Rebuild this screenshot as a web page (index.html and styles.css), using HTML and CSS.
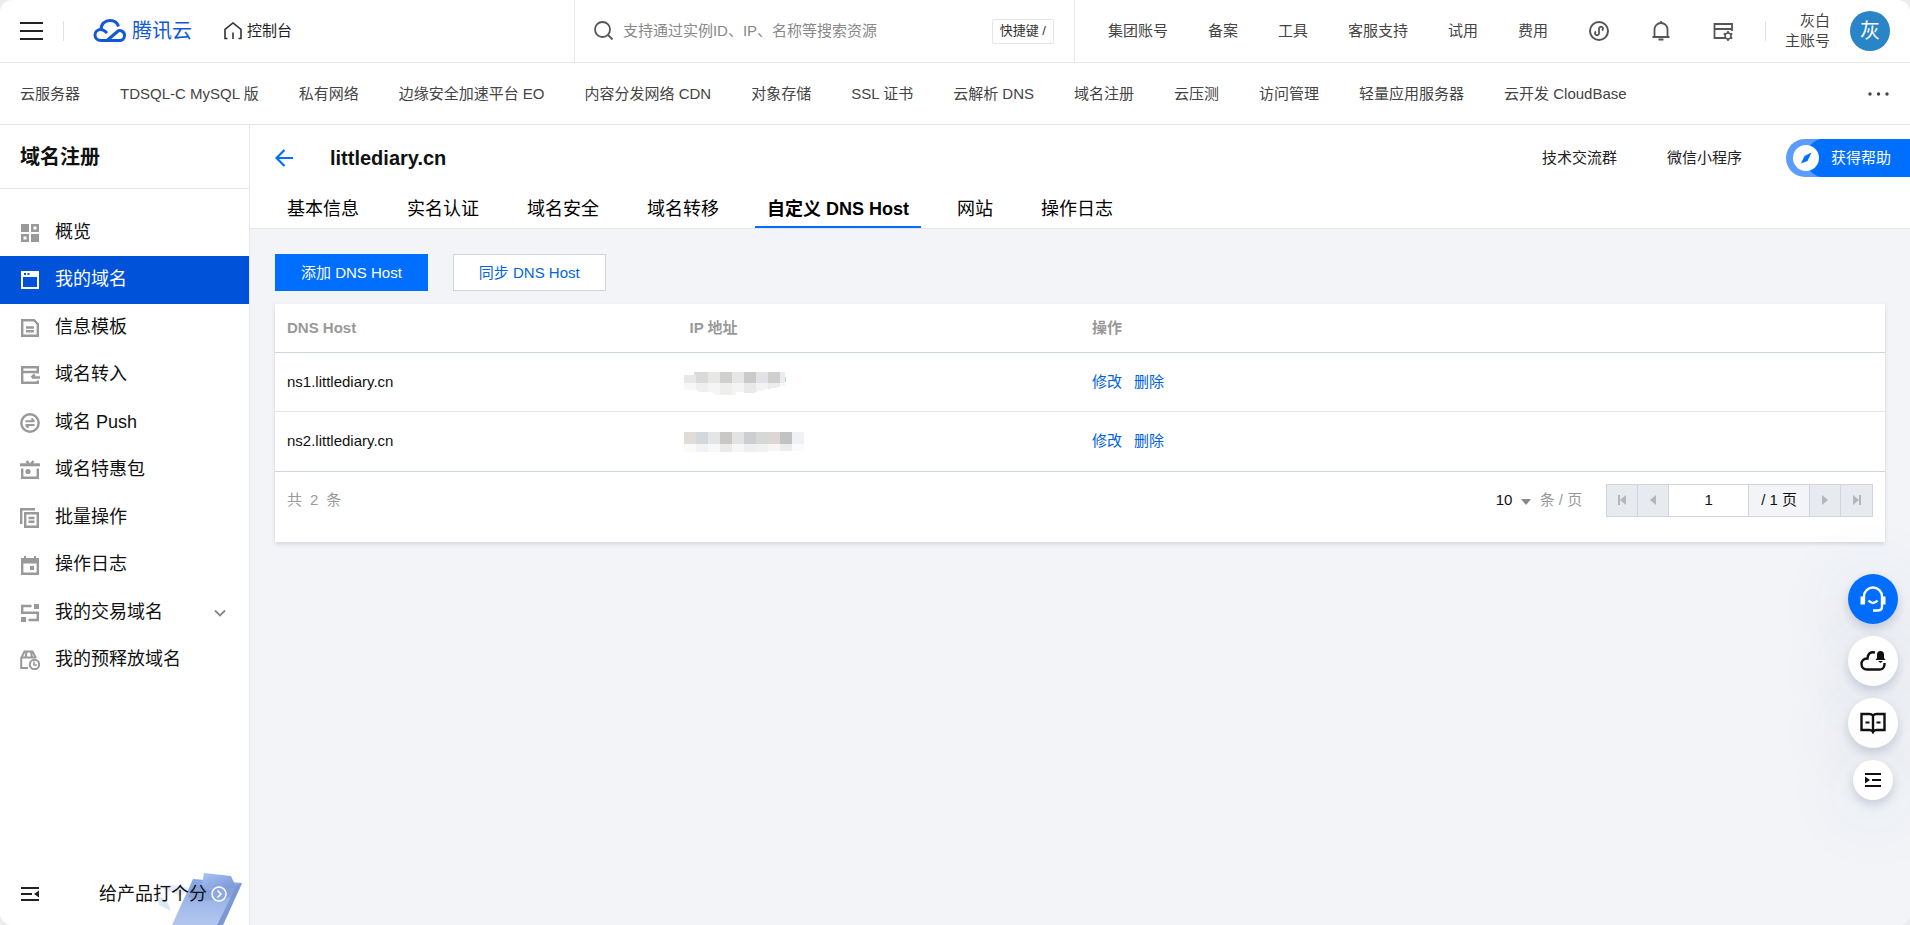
FILE: index.html
```html
<!DOCTYPE html>
<html lang="zh-CN">
<head>
<meta charset="utf-8">
<title>域名注册 - 控制台</title>
<link rel="stylesheet" href="styles.css">
</head>
<body>
<div class="app">
  <header class="topbar">
    <div class="topbar-left">
      <button class="icon-btn" aria-label="菜单">
        <svg width="23" height="18" viewBox="0 0 23 18"><path d="M0 1h23M0 9h23M0 17h23" stroke="#222" stroke-width="2"/></svg>
      </button>
      <span class="divider"></span>
      <a class="logo" href="#">
        <svg width="34" height="26" viewBox="0 0 34 26" fill="none" stroke="#1258d6" stroke-width="3">
          <path d="M14 22.500L24.500 13.500C27 11.500 31.500 13 31.500 17.500C31.500 21 29 22.500 26.500 22.500H8C4.500 22.500 2 20 2 17C2 14 4.500 11.500 8 11.500C10 11.500 11.500 12.500 14 15"/>
          <path d="M8 11.500C8 6 12 2.500 17 2.500C21.500 2.500 24.500 5 25.500 8.500"/>
        </svg>
        <span>腾讯云</span>
      </a>
      <a class="home" href="#">
        <svg width="18" height="18" viewBox="0 0 18 18" fill="none" stroke="#333" stroke-width="1.600"><path d="M3.500 16.500H1V7.500L9 1l8 6.500v9h-2.500M9 10.500V17"/></svg>
        <span>控制台</span>
      </a>
    </div>
    <form class="search">
      <svg width="20" height="20" viewBox="0 0 20 20" fill="none" stroke="#555" stroke-width="1.800"><circle cx="8.500" cy="8.500" r="7.500"/><path d="M14 14l4.500 4.500"/></svg>
      <input class="search-input" type="text" aria-label="搜索" placeholder="支持通过实例ID、IP、名称等搜索资源">
      <kbd class="shortcut">快捷键 /</kbd>
    </form>
    <nav class="topbar-right">
      <a href="#">集团账号</a>
      <a href="#">备案</a>
      <a href="#">工具</a>
      <a href="#">客服支持</a>
      <a href="#">试用</a>
      <a href="#">费用</a>
      <button class="icon-btn" aria-label="小程序">
        <svg width="22" height="22" viewBox="0 0 22 22" fill="none" stroke="#555" stroke-width="2"><circle cx="11" cy="11" r="9"/><path d="M8 11.500a2 2 0 1 0 3 1.800V8.700A2 2 0 1 1 14 10.500" stroke-width="1.800"/></svg>
      </button>
      <button class="icon-btn" aria-label="消息">
        <svg width="22" height="22" viewBox="0 0 22 22" fill="none" stroke="#555" stroke-width="1.800"><path d="M2.500 17h17M4.500 17V9.500a6.500 6.500 0 0 1 13 0V17M11 3V1M8.500 19.500h5"/></svg>
      </button>
      <button class="icon-btn" aria-label="设置">
        <svg width="22" height="22" viewBox="0 0 22 22" fill="none" stroke="#555" stroke-width="1.800"><path d="M20 11V4H2.500v14H12M2.500 9H20"/><circle cx="16" cy="16" r="3" stroke-width="1.600"/><path d="M16 11v2M16 19v2M11.700 13.500l1.700 1M18.600 17.500l1.700 1M20.300 13.500l-1.700 1M13.400 17.500l-1.700 1" stroke-width="1.700"/></svg>
      </button>
    </nav>
    <div class="account">
      <div class="account-name">灰白<br>主账号</div>
      <button class="avatar">灰</button>
    </div>
  </header>

  <nav class="products">
    <a href="#">云服务器</a>
    <a href="#">TDSQL-C MySQL 版</a>
    <a href="#">私有网络</a>
    <a href="#">边缘安全加速平台 EO</a>
    <a href="#">内容分发网络 CDN</a>
    <a href="#">对象存储</a>
    <a href="#">SSL 证书</a>
    <a href="#">云解析 DNS</a>
    <a href="#">域名注册</a>
    <a href="#">云压测</a>
    <a href="#">访问管理</a>
    <a href="#">轻量应用服务器</a>
    <a href="#">云开发 CloudBase</a>
    <button class="icon-btn more" aria-label="更多">
      <svg width="22" height="4" viewBox="0 0 22 4" fill="#444"><circle cx="2" cy="2" r="1.700"/><circle cx="10.500" cy="2" r="1.700"/><circle cx="19" cy="2" r="1.700"/></svg>
    </button>
  </nav>

  <div class="body">
    <aside class="sidebar">
      <h2 class="sidebar-title">域名注册</h2>
      <nav class="menu">
        <a class="menu-item" href="#">
          <svg class="menu-icon" viewBox="0 0 20 20"><path fill-rule="evenodd" d="M1 1h8v8H1zM11 1h8v8h-8zM13.500 3.500v3h3v-3zM1 11h8v8H1zM3.500 13.500v3h3v-3zM11 11h8v8h-8z"/></svg>
          <span>概览</span>
        </a>
        <a class="menu-item active" href="#" aria-current="page">
          <svg class="menu-icon" viewBox="0 0 20 20"><path fill-rule="evenodd" d="M1 1h18v18H1zM3 7v10h14V7zM4 3v2h2V3zM7.500 3v2h2V3z"/></svg>
          <span>我的域名</span>
        </a>
        <a class="menu-item" href="#">
          <svg class="menu-icon line" viewBox="0 0 20 20"><path d="M2.200 2.200H14L17.800 6v11.800H2.200zM6 9.500h8M6 13.200h8"/></svg>
          <span>信息模板</span>
        </a>
        <a class="menu-item" href="#">
          <svg class="menu-icon line" viewBox="0 0 20 20"><path d="M17.800 8.500V2.200H2.200v15.600h15.600V15.500M2 7h16M20 12.500h-8M14.800 9.500l-3.300 3"/></svg>
          <span>域名转入</span>
        </a>
        <a class="menu-item" href="#">
          <svg class="menu-icon line" viewBox="0 0 20 20"><circle cx="10" cy="10" r="8.700"/><path d="M5.500 8.300h9M11.500 5.500l2.500 2.500M14.500 12h-9M8.500 14.800L6 12.300" stroke-width="2"/></svg>
          <span>域名 Push</span>
        </a>
        <a class="menu-item" href="#">
          <svg class="menu-icon line" viewBox="0 0 20 20"><path d="M0 4.800h20" stroke-width="3"/><path d="M2.200 8.500v9.300h15.600V8.500M6.500 1l2.500 3M13.500 1L11 4"/><circle cx="8" cy="11.500" r="2.600" fill="#999" stroke="none"/></svg>
          <span>域名特惠包</span>
        </a>
        <a class="menu-item" href="#">
          <svg class="menu-icon line" viewBox="0 0 20 20"><path d="M1.200 16V1.200H15M5.200 5.200h12.600v13.600H5.200zM8.500 10h6M8.500 13.800h6"/></svg>
          <span>批量操作</span>
        </a>
        <a class="menu-item" href="#">
          <svg class="menu-icon" viewBox="0 0 20 20"><path fill-rule="evenodd" d="M4 1h2v2h8V1h2v2h3v17H1V3h3zM3.400 8.500v9.100h13.200V8.500zM10 11h4v4h-4z"/></svg>
          <span>操作日志</span>
        </a>
        <a class="menu-item" href="#">
          <svg class="menu-icon line" viewBox="0 0 20 20"><path d="M11.500 3H2.200v6.800h15.600V17H8.500"/><path d="M14 1h5v5h-5zM1 14h5v5H1z" fill="#999" stroke="none"/></svg>
          <span>我的交易域名</span>
          <svg class="chevron" width="12" height="8" viewBox="0 0 12 8" fill="none" stroke="#888" stroke-width="1.800"><path d="M1 1.500l5 5 5-5"/></svg>
        </a>
        <a class="menu-item" href="#">
          <svg class="menu-icon line" viewBox="0 0 20 20"><path d="M8 18H1.200V8L4.500 1.500h8L16 8M1 7.500h15M6.500 2L5.500 7.500M11 2l1 5.500" stroke-width="2"/><circle cx="14.500" cy="14.500" r="4.700" stroke-width="2"/><path d="M14 11.500v3.500h3" stroke-width="1.500"/></svg>
          <span>我的预释放域名</span>
        </a>
      </nav>
      <div class="sidebar-footer">
        <svg class="clipboard" width="90" height="52" viewBox="0 0 90 52">
          <defs>
            <linearGradient id="board" x1="0" y1="0" x2="0" y2="1"><stop offset="0" stop-color="#86a6e0"/><stop offset="1" stop-color="#b4c8f0"/></linearGradient>
            <linearGradient id="clip" x1="0" y1="0" x2="1" y2="1"><stop offset="0" stop-color="#a9c3f4"/><stop offset="1" stop-color="#7896d6"/></linearGradient>
          </defs>
          <path d="M40 6l49 4-19 42H19z" fill="url(#board)"/>
          <path d="M84 12l5-2-19 42h-6z" fill="#7c98d2"/>
          <path d="M38 14c8-5 14 4 24 3s14-5 22-4l-4 10c-9 5-34 6-45 1z" fill="#7893d0" opacity="0.500"/>
          <path d="M51 0l27 3 5 11c-8 2-24 2-34-2z" fill="url(#clip)"/>
          <path d="M4 22l10 6 4 10-12-6z" fill="#dfe6f4"/>
          <path d="M4 13q16-3 32 2l-8 8z" fill="#e4eaf7"/>
        </svg>
        <button class="icon-btn" aria-label="收起">
          <svg width="18" height="16" viewBox="0 0 18 16"><path d="M0 2h18M0 8h11M0 14h18" stroke="#222" stroke-width="2"/><path d="M18 4.500v7L13 8z" fill="#222"/></svg>
        </button>
        <a class="rate" href="#">
          <span>给产品打个分</span>
          <svg width="16" height="16" viewBox="0 0 16 16" fill="none" stroke="#fff" stroke-width="1.500"><circle cx="8" cy="8" r="7" fill="#8ea8e0"/><path d="M6.500 4.500L10 8l-3.500 3.500"/></svg>
        </a>
      </div>
    </aside>

    <main class="main">
      <div class="page-head">
        <div class="title-row">
          <a class="back" href="#" aria-label="返回">
            <svg width="18" height="18" viewBox="0 0 18 18" fill="none" stroke="#006eff" stroke-width="2.200"><path d="M18 9H2M9.500 1L1.500 9l8 8"/></svg>
          </a>
          <h1 class="page-title">littlediary.cn</h1>
          <div class="head-links">
            <a href="#">技术交流群</a>
            <a href="#">微信小程序</a>
            <button class="help">
              <svg width="38" height="38" viewBox="0 0 38 38"><circle cx="20" cy="19" r="13" fill="#fff"/><path d="M25.500 13.500l-4 8.500-6.500 2.500 3.500-7.500z" fill="#006eff"/></svg>
              <span>获得帮助</span>
            </button>
          </div>
        </div>
        <nav class="tabs">
          <a class="tab" href="#">基本信息</a>
          <a class="tab" href="#">实名认证</a>
          <a class="tab" href="#">域名安全</a>
          <a class="tab" href="#">域名转移</a>
          <a class="tab current" href="#" aria-current="page">自定义 DNS Host</a>
          <a class="tab" href="#">网站</a>
          <a class="tab" href="#">操作日志</a>
        </nav>
      </div>

      <div class="content">
        <div class="actions">
          <button class="btn primary">添加 DNS Host</button>
          <button class="btn">同步 DNS Host</button>
        </div>
        <section class="card">
          <table class="hosts">
            <thead>
              <tr><th>DNS Host</th><th>IP 地址</th><th class="ops">操作</th></tr>
            </thead>
            <tbody>
              <tr>
                <td>ns1.littlediary.cn</td>
                <td class="masked">
                  <svg width="102" height="23" viewBox="0 0 102 23" shape-rendering="crispEdges">
                    <path d="M0 3h12v8H0z" fill="#e8e8e8"/><path d="M10 0h14v11H12V3h-2z" fill="#dadada"/><path d="M24 0h12v11H24z" fill="#e7e7e5"/><path d="M36 0h12v11H36z" fill="#d0d0ce"/><path d="M48 0h12v11H48z" fill="#e6e6e7"/><path d="M60 0h12v11H60z" fill="#cacaca"/><path d="M72 0h12v11H72z" fill="#e1e2e5"/><path d="M84 0h12v11H84z" fill="#d1cfce"/><path d="M96 0h5v11h-5z" fill="#e8eced"/><path d="M101 5h1v5h-1z" fill="#a8dff0"/>
                    <path d="M0 11h12v7H0z" fill="#f7f7f7"/><path d="M12 11h12v9h-9l-3-2z" fill="#efefef"/><path d="M24 11h12v12h-4l-4-3h-4z" fill="#f5f5f5"/><path d="M36 11h12v12H36z" fill="#eeeeec"/><path d="M48 11h12v9h-8v3h-4z" fill="#f4f4f4"/><path d="M60 11h12v9l-2 1H60z" fill="#e9e9e9"/><path d="M72 11h12v6l-12 3z" fill="#f3f3f4"/><path d="M84 11h12v4l-12 2z" fill="#ececec"/><path d="M96 11h5v3h-5z" fill="#f7f7f7"/>
                  </svg>
                </td>
                <td class="ops"><a href="#">修改</a><a href="#">删除</a></td>
              </tr>
              <tr>
                <td>ns2.littlediary.cn</td>
                <td class="masked">
                  <svg width="120" height="23" viewBox="0 0 120 23" shape-rendering="crispEdges">
                    <path d="M0 0h12v12H0z" fill="#e2dcd8"/><path d="M12 0h12v12H12z" fill="#d3d8dd"/><path d="M24 0h12v12H24z" fill="#e5e5e5"/><path d="M36 0h12v12H36z" fill="#c9c8c7"/><path d="M48 0h12v12H48z" fill="#e3e3e4"/><path d="M60 0h12v12H60z" fill="#cdced1"/><path d="M72 0h12v12H72z" fill="#d6d8d7"/><path d="M84 0h12v12H84z" fill="#dcd7d4"/><path d="M96 0h12v12H96z" fill="#c1c3c2"/><path d="M108 0h12v12h-12z" fill="#f0f1f7"/>
                    <path d="M0 12h12v8H0z" fill="#fcfaf8"/><path d="M12 12h12v8H12z" fill="#f0f2f5"/><path d="M24 12h12v8H24z" fill="#f8f8f8"/><path d="M36 12h12v8H36z" fill="#ebebeb"/><path d="M48 12h12v8H48z" fill="#f6f6f6"/><path d="M60 12h12v8H60z" fill="#efefef"/><path d="M72 12h12v8H72z" fill="#f1f1f1"/><path d="M84 12h12v7H84z" fill="#f8f6f4"/><path d="M96 12h12v7H96z" fill="#ececec"/><path d="M108 12h12v7h-12z" fill="#fafbfe"/>
                  </svg>
                </td>
                <td class="ops"><a href="#">修改</a><a href="#">删除</a></td>
              </tr>
            </tbody>
          </table>
          <div class="table-foot">
            <div class="total"><span>共</span><span>2</span><span>条</span></div>
            <div class="page-size">
              <label class="size-field">
                <select class="size-select" aria-label="每页条数"><option>10</option><option>20</option><option>50</option></select>
                <svg class="size-arrow" width="10" height="6" viewBox="0 0 10 6"><path d="M0 0h10L5 6z" fill="#888"/></svg>
              </label>
              <span class="size-unit">条 / 页</span>
            </div>
            <div class="pager">
              <button class="pager-btn" disabled aria-label="第一页"><svg width="10" height="10" viewBox="0 0 10 10"><path d="M1 0h2v10H1zM9 0v10L3 5z" fill="#b4b6ba"/></svg></button>
              <button class="pager-btn" disabled aria-label="上一页"><svg width="10" height="10" viewBox="0 0 10 10"><path d="M8 0v10L2 5z" fill="#b4b6ba"/></svg></button>
              <input class="pager-input" type="text" value="1" aria-label="页码">
              <span class="pager-total">/ 1 页</span>
              <button class="pager-btn" disabled aria-label="下一页"><svg width="10" height="10" viewBox="0 0 10 10"><path d="M2 0v10L8 5z" fill="#b4b6ba"/></svg></button>
              <button class="pager-btn" disabled aria-label="最后一页"><svg width="10" height="10" viewBox="0 0 10 10"><path d="M7 0h2v10H7zM1 0v10l6-5z" fill="#b4b6ba"/></svg></button>
            </div>
          </div>
        </section>
      </div>
    </main>
  </div>

  <div class="float">
    <button class="float-btn blue" aria-label="在线客服">
      <svg width="26" height="26" viewBox="0 0 26 26" fill="none" stroke="#fff" stroke-width="2.400"><path d="M4 17V10.500a9 9 0 0 1 18 0V20.500q0 4-4 4h-5M8.500 14.500q4.500 5 9 0"/><path d="M0.500 10.500H5v8H.500zM21 10.500h4.500v8H21z" fill="#fff" stroke="none"/></svg>
    </button>
    <button class="float-btn" aria-label="云消息">
      <svg width="26" height="22" viewBox="0 0 26 22"><path d="M15 2.500Q8 1 7.500 8.500C3 8.500 1.500 11.500 1.500 14c0 3.500 2.500 5.500 5.500 5.500h12.500q4.500 0 5-5V13" fill="none" stroke="#111" stroke-width="2.400"/><path d="M17 8V4.500a3.500 3.500 0 0 1 7 0V8l1.500 2H15.500zM18 11h5l-2.500 2z" fill="#111"/></svg>
    </button>
    <button class="float-btn" aria-label="文档">
      <svg width="26" height="22" viewBox="0 0 26 22"><path d="M13 3.500Q11.500 2 9.500 2H1.500v16h8q2.500 0 3.500 2 1-2 3.500-2h8V2h-8Q14.500 2 13 3.500V20" fill="none" stroke="#111" stroke-width="2.400"/><path d="M5.500 10.500h4M16.500 10.500h4" stroke="#111" stroke-width="2"/></svg>
    </button>
    <button class="float-btn small" aria-label="展开">
      <svg width="16" height="16" viewBox="0 0 16 16"><path d="M0 2h16M7 8h9M0 14h16" stroke="#111" stroke-width="2"/><path d="M0 4.500v7L5 8z" fill="#111"/></svg>
    </button>
  </div>
</div>
</body>
</html>
```
FILE: styles.css
```css
* { box-sizing: border-box; }

body {
  margin: 0;
  background: #ececee;
  color: #111;
  font: 15px/20px "Liberation Sans", "Noto Sans CJK SC", sans-serif;
}

a { color: inherit; text-decoration: none; }

button, input, select { font: inherit; color: inherit; margin: 0; }

svg { display: block; flex: none; }

.app {
  position: relative;
  display: flex;
  flex-direction: column;
  min-height: 100vh;
  overflow: hidden;
  border-radius: 12px;
  background: #fff;
}

.icon-btn {
  display: flex;
  padding: 0;
  border: 0;
  background: none;
  cursor: pointer;
}

.divider { width: 1px; height: 20px; background: #e0e2e6; }

/* Top bar */
.topbar {
  display: flex;
  align-items: center;
  height: 63px;
  padding: 0 20px;
  border-bottom: 1px solid #e7e8ea;
  color: #444;
}

.topbar-left { display: flex; align-items: center; flex: 1; }
.topbar-left .divider { margin: 0 29px 0 20px; }

.logo {
  display: flex;
  align-items: center;
  gap: 5px;
  margin-right: 32px;
  color: #1258d6;
  font-size: 20px;
}

.home { display: flex; align-items: center; gap: 5px; color: #222; }

.search {
  display: flex;
  align-items: center;
  gap: 9px;
  width: 501px;
  height: 62px;
  padding: 0 20px 0 19px;
  border: solid #e7e8ea;
  border-width: 0 1px;
}

.search-input {
  flex: 1;
  min-width: 0;
  padding: 0;
  border: 0;
  outline: 0;
  background: none;
}

.search-input::placeholder { color: #888; opacity: 1; }

.shortcut {
  padding: 1px 7px 2px;
  border: 1px solid #e3e5e8;
  border-radius: 2px;
  font-family: inherit;
  font-size: 13px;
  color: #333;
}

.topbar-right { display: flex; align-items: center; gap: 40px; margin-left: 33px; }

.account {
  display: flex;
  align-items: center;
  gap: 20px;
  margin-left: 31px;
  background: linear-gradient(#e0e2e6, #e0e2e6) left center / 1px 20px no-repeat;
  padding-left: 20px;
}

.account-name { text-align: right; }

.avatar {
  width: 40px;
  height: 40px;
  padding: 0;
  border: 0;
  border-radius: 50%;
  background: #2a85c8;
  color: #fff;
  font-size: 20px;
}

/* Product shortcuts */
.products {
  display: flex;
  align-items: center;
  gap: 40px;
  height: 62px;
  padding: 0 20px;
  border-bottom: 1px solid #e7e8ea;
  color: #444;
  white-space: nowrap;
}

.more { margin-left: auto; }

/* Sidebar */
.body { display: flex; flex: 1; }

.sidebar {
  display: flex;
  flex-direction: column;
  flex: none;
  width: 250px;
  border-right: 1px solid #e7e8ea;
}

.sidebar-title {
  margin: 0;
  padding: 20px 20px 19px;
  border-bottom: 1px solid #e7e8ea;
  font-size: 20px;
  line-height: 24px;
}

.menu { padding-top: 20px; font-size: 18px; }

.menu-item {
  display: flex;
  align-items: center;
  gap: 15px;
  height: 47px;
  padding: 0 20px;
}

.menu-item:nth-child(even) { height: 48px; }

.menu-item span { padding-bottom: 2px; }

.menu-item.active { background: #0052d9; color: #fff; }

.menu-icon { width: 20px; height: 20px; fill: #999; }
.menu-icon.line { fill: none; stroke: #999; stroke-width: 2.4px; }
.active .menu-icon { fill: #fff; }

.chevron { margin: 0 3px 0 auto; }

.sidebar-footer {
  position: relative;
  display: flex;
  align-items: center;
  justify-content: space-between;
  margin-top: auto;
  padding: 0 22px 21px 21px;
  font-size: 18px;
}

.clipboard { position: absolute; right: 6px; bottom: 0; }

.rate { position: relative; display: flex; align-items: center; gap: 4px; }

/* Main area */
.main {
  display: flex;
  flex-direction: column;
  flex: 1;
  min-width: 0;
  background: #f2f4f8;
}

.page-head { background: #fff; border-bottom: 1px solid #e4e6ea; }

.title-row {
  display: flex;
  align-items: center;
  height: 65px;
  padding-left: 25px;
}

.page-title { margin: 0 0 0 37px; font-size: 20px; line-height: 24px; }

.head-links {
  display: flex;
  align-items: center;
  gap: 50px;
  margin-left: auto;
  color: #222;
}

.help {
  display: flex;
  align-items: center;
  gap: 7px;
  height: 38px;
  margin-left: -6px;
  padding: 0 19px 0 0;
  border: 0;
  border-radius: 19px 0 0 19px;
  background: radial-gradient(circle at 39px 19px, #006eff 19px, transparent 20px), linear-gradient(90deg, #5a9dff 38px, #006eff 38px);
  color: #fff;
}

.tabs { display: flex; gap: 24px; padding: 0 25px; font-size: 18px; }

.tab {
  padding: 9px 12px 7px;
  border-bottom: 2px solid transparent;
  color: #000;
}

.tab.current { border-color: #006eff; font-weight: bold; }

.content { padding: 25px; }

.actions { display: flex; gap: 25px; }

.btn {
  height: 37px;
  padding: 0 25px;
  border: 1px solid #cfd5de;
  background: #fff;
  color: #0065e0;
}

.btn.primary { border-color: #006eff; background: #006eff; color: #fff; }

.card {
  margin-top: 13px;
  background: #fff;
  box-shadow: 0 2px 4px rgba(54, 58, 80, 0.16);
}

.hosts { width: 100%; border-collapse: collapse; table-layout: fixed; }

.hosts th {
  height: 48px;
  padding: 0 12px;
  border-bottom: 1px solid #cfd5de;
  color: #999;
  text-align: left;
}

.hosts td { height: 59px; padding: 0 12px; border-bottom: 1px solid #e5e8ec; }
.hosts tr:last-child td { height: 60px; border-bottom-color: #cfd5de; }

.hosts td.masked { padding: 4px 0 0 6px; }
.hosts .ops { width: 50%; }

.ops a { margin-right: 12px; color: #0061e0; }

.table-foot {
  display: flex;
  align-items: center;
  padding: 12px 12px 25px;
}

.total { display: flex; gap: 8px; color: #999; }

.page-size {
  display: flex;
  align-items: center;
  gap: 9px;
  margin: 0 24px 0 auto;
  color: #999;
}

.size-field { display: flex; align-items: center; gap: 8px; }

.size-arrow { margin-top: 4px; }

.size-select {
  appearance: none;
  padding: 0;
  border: 0;
  background: none;
  color: #111;
}

.pager { display: flex; height: 33px; border: 1px solid #cfd5de; }

.pager > * { border: 0; border-right: 1px solid #cfd5de; }
.pager > :last-child { border-right: 0; }

.pager-btn {
  display: flex;
  align-items: center;
  justify-content: center;
  width: 31px;
  padding: 0;
  background: #e7eaef;
}

.pager-input { width: 80px; padding: 0; text-align: center; background: #fff; }

.pager-total { padding: 5px 12px; background: #f2f4f8; }

/* Floating tools */
.float {
  position: fixed;
  right: 12px;
  bottom: 125px;
  display: flex;
  flex-direction: column;
  align-items: center;
  gap: 12px;
}

.float-btn {
  display: flex;
  align-items: center;
  justify-content: center;
  width: 50px;
  height: 50px;
  padding: 0;
  border: 0;
  border-radius: 50%;
  background: #fff;
  box-shadow: 0 5px 10px rgba(55, 75, 115, 0.2), 0 10px 80px rgba(55, 75, 115, 0.16);
}

.float-btn.small { width: 40px; height: 40px; }
.float-btn.blue { background: #006eff; }
```
